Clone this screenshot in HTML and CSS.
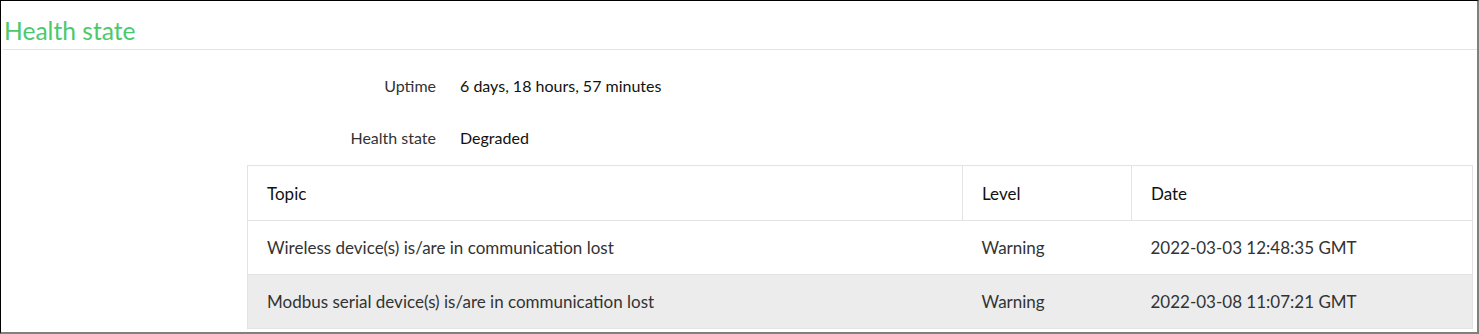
FILE: index.html
```html
<!DOCTYPE html>
<html>
<head>
<meta charset="utf-8">
<link rel="stylesheet" href="styles.css">
</head>
<body>
<div class="frame">
  <h1 class="title">Health state</h1>
  <div class="content">
    <div class="props">
      <div class="prop-label">Uptime</div>
      <div class="prop-value">6 days, 18 hours, 57 minutes</div>
      <div class="prop-label">Health state</div>
      <div class="prop-value">Degraded</div>
    </div>
    <table class="issues">
      <thead>
        <tr><th class="col-topic">Topic</th><th class="col-level">Level</th><th class="col-date">Date</th></tr>
      </thead>
      <tbody>
        <tr><td>Wireless device(s) is/are in communication lost</td><td>Warning</td><td>2022-03-03 12:48:35 GMT</td></tr>
        <tr class="alt"><td>Modbus serial device(s) is/are in communication lost</td><td>Warning</td><td>2022-03-08 11:07:21 GMT</td></tr>
      </tbody>
    </table>
  </div>
</div>
</body>
</html>
```
FILE: styles.css
```css
html, body {
  margin: 0;
  padding: 0;
  background: #fff;
}
body {
  font-family: Lato, "Open Sans", sans-serif;
  color: #222;
}
.frame {
  box-sizing: border-box;
  width: 1479px;
  height: 334px;
  border-top: 1px solid #000;
  border-left: 1px solid #000;
  border-right: 2px solid #808080;
  border-bottom: 2px solid #808080;
  overflow: hidden;
}
.title {
  margin: 0 0 0 2px;
  padding: 15px 0 4px 1px;
  font-size: 24.6px;
  font-weight: 400;
  line-height: 29px;
  color: #4cc96a;
  border-bottom: 1px solid #e3e3e3;
}
.content {
  padding: 0 4px 0 246px;
}
.props {
  display: grid;
  grid-template-columns: 189px 1fr;
  column-gap: 24px;
  row-gap: 33px;
  padding: 26px 0 18px;
  font-size: 16px;
  line-height: 19px;
}
.prop-label {
  text-align: right;
  color: #333;
}
.prop-value {
  color: #111;
}
.issues {
  width: 1226px;
  border-collapse: collapse;
  border: 1px solid #e3e3e3;
  font-size: 17px;
}
.issues th,
.issues td {
  text-align: left;
  font-weight: 400;
  padding: 0 19px;
  height: 53px;
  border-bottom: 1px solid #e3e3e3;
}
.issues th {
  color: #111;
  border-right: 1px solid #e3e3e3;
  height: 54px;
}
.issues td {
  color: #333;
}
.col-topic { width: 676px; }
.col-level { width: 130px; }
.issues tr.alt td {
  background: #ececec;
}
```
